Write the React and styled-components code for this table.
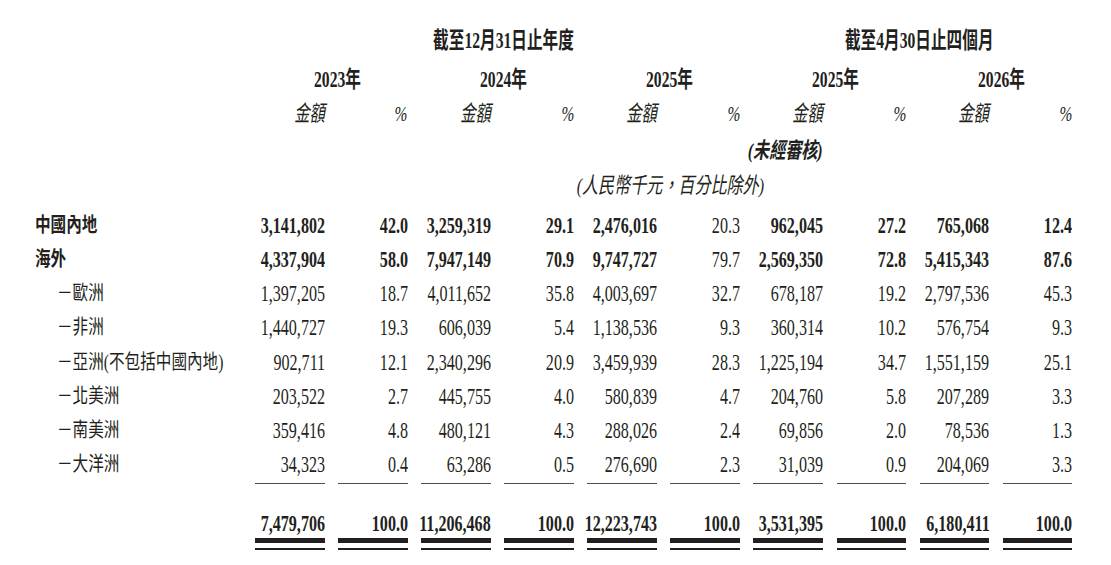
import React from 'react';
import styled, { createGlobalStyle } from 'styled-components';

const INK = '#231f20';
const FONT = '"Liberation Serif", "Noto Sans CJK TC", serif';

const GlobalStyle = createGlobalStyle`
  html, body {
    margin: 0;
    padding: 0;
    background: #fff;
  }
`;

const Page = styled.div`
  width: 1111px;
  height: 565px;
  box-sizing: border-box;
  padding: 22px 0 0 35px;
  background: #fff;
  color: ${INK};
  font-family: ${FONT};
  overflow: hidden;
`;

// one grid template for every line of the table: label column + 10 figures
const Row = styled.div`
  display: grid;
  grid-template-columns: 206.6px repeat(10, 69.7px);
  column-gap: 13.4px;
  height: ${(p) => p.$h}px;
  margin-top: ${(p) => p.$mt || 0}px;
  margin-bottom: ${(p) => p.$mb || 0}px;
`;

const Cell = styled.div`
  grid-column: ${(p) => (p.$col ? `${p.$col} / span ${p.$span || 1}` : `span ${p.$span || 1}`)};
  display: flex;
  align-items: center;
  justify-content: ${(p) =>
    p.$align === 'left' ? 'flex-start' : p.$align === 'center' ? 'center' : 'flex-end'};
  padding-left: ${(p) => p.$pl || 0}px;
  white-space: nowrap;
  min-width: 0;
`;

// the print uses a condensed face, so every text run is squeezed horizontally
const Squeeze = styled.span`
  display: inline-block;
  line-height: 1;
  transform: scaleX(${(p) => p.$sx || 0.7});
  transform-origin: ${(p) => p.$origin || 'right'} center;
`;

const GroupTitle = styled(Squeeze)`
  font-size: 23px;
  font-weight: 700;
`;

const ColHead = styled(Squeeze)`
  font-size: 22px;
  font-style: italic;
  font-weight: 400;
`;

const Unaudited = styled(Squeeze)`
  font-size: 22px;
  font-style: italic;
  font-weight: 700;
`;

const Currency = styled(Squeeze)`
  font-size: 22px;
  font-style: italic;
  font-weight: 400;
`;

const Label = styled(Squeeze)`
  font-size: 20px;
  font-weight: ${(p) => (p.$bold ? 700 : 400)};
`;

const Num = styled(Squeeze)`
  font-size: 24px;
  font-weight: ${(p) => (p.$bold ? 700 : 400)};
`;

const RuleCell = styled.div`
  border-top: 1.5px solid #4d4d4f;
`;

const DoubleRuleCell = styled.div`
  height: 5px;
  border-top: 5px solid ${INK};
  border-bottom: 2px solid ${INK};
`;

const rows = [
  { label: '中國內地', bold: true, plain: [5], v: ['3,141,802', '42.0', '3,259,319', '29.1', '2,476,016', '20.3', '962,045', '27.2', '765,068', '12.4'] },
  { label: '海外', bold: true, plain: [5], v: ['4,337,904', '58.0', '7,947,149', '70.9', '9,747,727', '79.7', '2,569,350', '72.8', '5,415,343', '87.6'] },
  { label: '－歐洲', v: ['1,397,205', '18.7', '4,011,652', '35.8', '4,003,697', '32.7', '678,187', '19.2', '2,797,536', '45.3'] },
  { label: '－非洲', v: ['1,440,727', '19.3', '606,039', '5.4', '1,138,536', '9.3', '360,314', '10.2', '576,754', '9.3'] },
  { label: '－亞洲(不包括中國內地)', v: ['902,711', '12.1', '2,340,296', '20.9', '3,459,939', '28.3', '1,225,194', '34.7', '1,551,159', '25.1'] },
  { label: '－北美洲', v: ['203,522', '2.7', '445,755', '4.0', '580,839', '4.7', '204,760', '5.8', '207,289', '3.3'] },
  { label: '－南美洲', v: ['359,416', '4.8', '480,121', '4.3', '288,026', '2.4', '69,856', '2.0', '78,536', '1.3'] },
  { label: '－大洋洲', v: ['34,323', '0.4', '63,286', '0.5', '276,690', '2.3', '31,039', '0.9', '204,069', '3.3'] },
];

const totals = ['7,479,706', '100.0', '11,206,468', '100.0', '12,223,743', '100.0', '3,531,395', '100.0', '6,180,411', '100.0'];

const years = ['2023年', '2024年', '2025年', '2025年', '2026年'];

const cols = Array.from({ length: 10 }, (_, i) => i);

const App = () => (
  <>
    <GlobalStyle />
    <Page>
      <Row $h={36}>
        <Cell $col={2} $span={6} $align="center" $pl={12}>
          <GroupTitle $origin="center" $sx={0.68}>截至12月31日止年度</GroupTitle>
        </Cell>
        <Cell $col={8} $span={4} $align="center" $pl={12}>
          <GroupTitle $origin="center" $sx={0.68}>截至4月30日止四個月</GroupTitle>
        </Cell>
      </Row>

      <Row $h={42}>
        {years.map((y, i) => (
          <Cell key={i} $col={2 + i * 2} $span={2} $align="center" $pl={12}>
            <GroupTitle $origin="center" $sx={0.68}>{y}</GroupTitle>
          </Cell>
        ))}
      </Row>

      <Row $h={28}>
        {cols.map((i) => (
          <Cell key={i} $col={2 + i}>
            <ColHead $sx={0.7}>{i % 2 === 0 ? '金額' : '%'}</ColHead>
          </Cell>
        ))}
      </Row>

      <Row $h={46}>
        <Cell $col={8}>
          <Unaudited $sx={0.73}>(未經審核)</Unaudited>
        </Cell>
      </Row>

      <Row $h={24} $mb={10}>
        <Cell $col={2} $span={10} $align="center" $pl={14}>
          <Currency $origin="center" $sx={0.73}>(人民幣千元，百分比除外)</Currency>
        </Cell>
      </Row>

      {rows.map((r) => (
        <Row key={r.label} $h={34.14}>
          <Cell $align="left" $pl={r.bold ? 0 : 22}>
            <Label $bold={r.bold} $origin="left" $sx={0.78}>{r.label}</Label>
          </Cell>
          {r.v.map((val, i) => (
            <Cell key={i}>
              <Num $bold={r.bold && !(r.plain || []).includes(i)} $sx={0.67}>{val}</Num>
            </Cell>
          ))}
        </Row>
      ))}

      <Row $h={1.5} $mt={1.5}>
        {cols.map((i) => (
          <RuleCell key={i} style={{ gridColumn: i + 2 }} />
        ))}
      </Row>

      <Row $h={30} $mt={24}>
        {totals.map((val, i) => (
          <Cell key={i} $col={2 + i}>
            <Num $bold $sx={0.67}>{val}</Num>
          </Cell>
        ))}
      </Row>

      <Row $h={12}>
        {cols.map((i) => (
          <DoubleRuleCell key={i} style={{ gridColumn: i + 2 }} />
        ))}
      </Row>
    </Page>
  </>
);

export default App;
